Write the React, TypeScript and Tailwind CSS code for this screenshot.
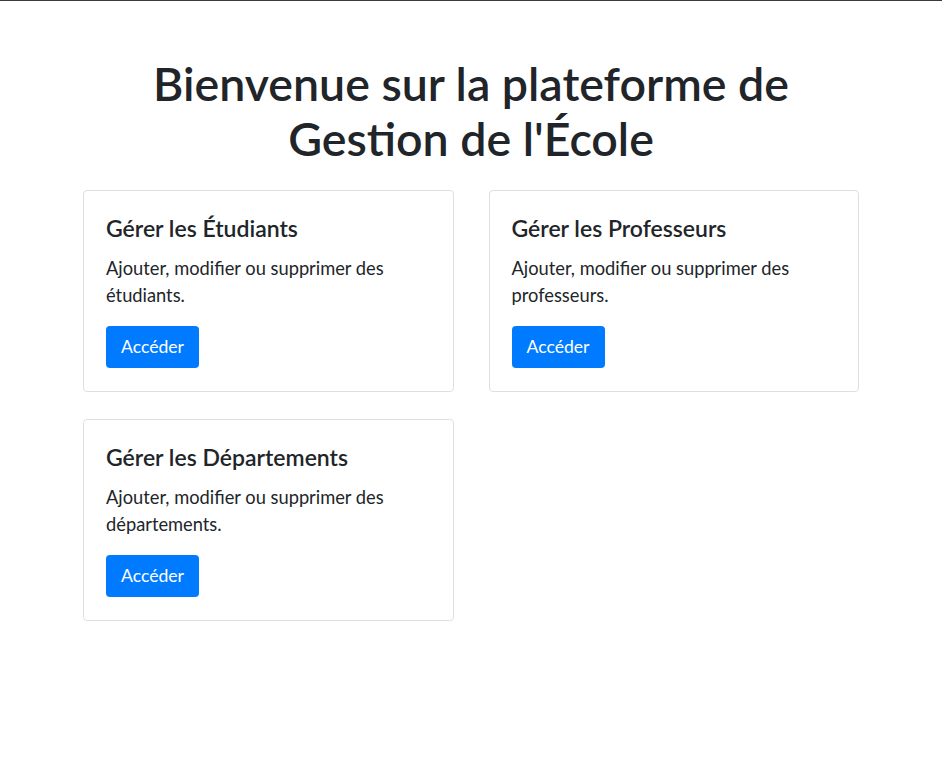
const cards = [
  { title: "Gérer les Étudiants", text: "Ajouter, modifier ou supprimer des étudiants." },
  { title: "Gérer les Professeurs", text: "Ajouter, modifier ou supprimer des professeurs." },
  { title: "Gérer les Départements", text: "Ajouter, modifier ou supprimer des départements." },
];

export default function App() {
  return (
    <div
      className="min-h-[775px] w-full border-t border-[#3a3a3a] bg-white text-[#212529]"
      style={{ fontFamily: '"Segoe UI", Lato, "Noto Sans", sans-serif' }}
    >
      <div className="mx-auto w-[776px] pt-[55px]">
        <h1 className="mx-auto mb-[24px] w-[680px] text-center text-[46.5px] font-semibold leading-[55px]">
          Bienvenue sur la plateforme de Gestion de l'École
        </h1>
        <div className="grid grid-cols-2 gap-x-[35px] gap-y-[27px]">
          {cards.map((c) => (
            <div key={c.title} className="rounded-[4px] border border-[#dfdfdf] px-[22px] pt-[24px] pb-[23px]">
              <h5 className="mb-[13px] text-[23px] font-semibold leading-[27px]">{c.title}</h5>
              <p className="mb-[18px] pr-[40px] text-[18.3px] leading-[26.6px]">{c.text}</p>
              <button className="rounded-[4px] bg-[#007bff] px-[15px] py-[8px] text-[17.6px] leading-[26px] text-white">
                Accéder
              </button>
            </div>
          ))}
        </div>
      </div>
    </div>
  );
}
